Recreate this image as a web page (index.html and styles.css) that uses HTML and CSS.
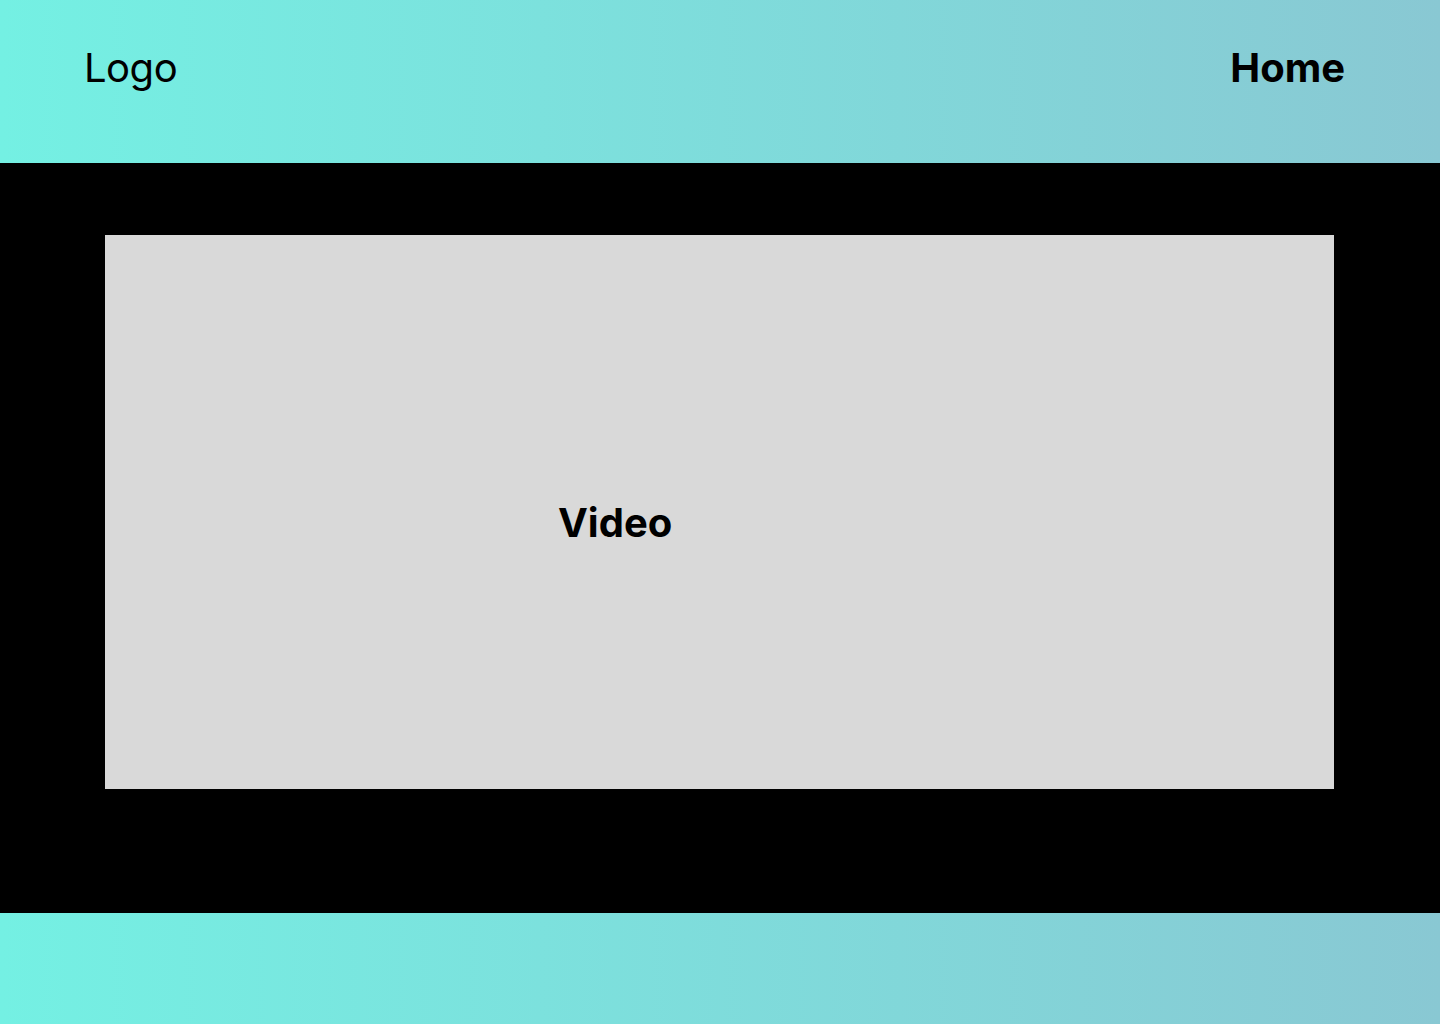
FILE: index.html
```html
<!DOCTYPE html>
<html lang="en">
<head>
<meta charset="utf-8">
<title>Video</title>
<link rel="stylesheet" href="styles.css">
</head>
<body>
<header class="header">
  <div class="logo">Logo</div>
  <nav class="nav"><a class="nav-link" href="#">Home</a></nav>
</header>
<main class="stage">
  <div class="video">
    <span class="video-label">Video</span>
  </div>
</main>
<footer class="footer"></footer>
</body>
</html>
```

FILE: styles.css
```css
* { box-sizing: border-box; }
html, body { margin: 0; padding: 0; }
body {
  font-family: Inter, "Noto Sans", sans-serif;
  color: #000;
  background: #000;
  width: 1440px;
  height: 1024px;
  display: flex;
  flex-direction: column;
}
.header {
  height: 163px;
  background: linear-gradient(90deg, #74F0E3 0%, #89C8D3 100%);
  display: flex;
  justify-content: space-between;
  align-items: flex-start;
  padding: 44px 95px 0 84px;
}
.logo {
  font-size: 40px;
  line-height: 48px;
  font-weight: 400;
  letter-spacing: -0.5px;
}
.nav-link {
  font-size: 40px;
  line-height: 48px;
  font-weight: 700;
  color: #000;
  text-decoration: none;
}
.stage {
  height: 750px;
  background: #000;
  padding: 72px 106px 0 105px;
}
.video {
  height: 554px;
  background: #D9D9D9;
  padding: 264px 0 0 453px;
}
.video-label {
  font-size: 40px;
  line-height: 48px;
  font-weight: 700;
}
.footer {
  height: 111px;
  background: linear-gradient(90deg, #74F0E3 0%, #89C8D3 100%);
}
```
